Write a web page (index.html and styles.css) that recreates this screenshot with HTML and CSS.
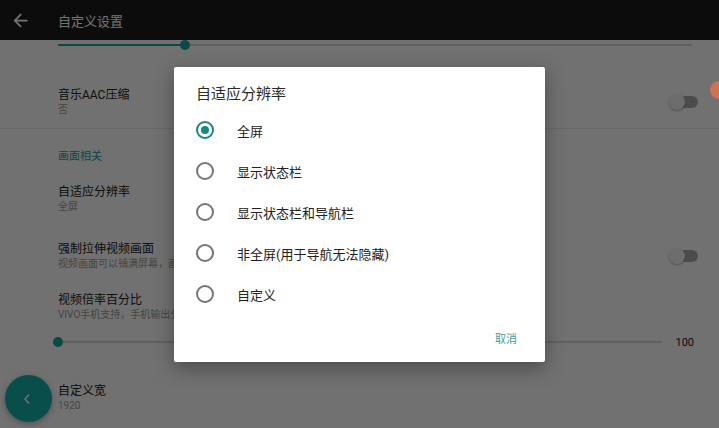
FILE: index.html
```html
<!DOCTYPE html>
<html lang="zh-CN">
<head>
    <meta charset="UTF-8">
    <meta name="viewport" content="width=device-width, initial-scale=1.0">
    <title>自定义设置</title>
    <link rel="stylesheet" href="styles.css">
</head>
<body>
    <div class="screen">
        <div class="appbar">
            <svg class="back" viewBox="0 0 24 24"><path d="M20 11H7.83l5.59-5.59L12 4l-8 8 8 8 1.41-1.41L7.83 13H20v-2z"/></svg>
            <span class="appbar-title">自定义设置</span>
        </div>

        <div class="prefs">
            <div class="seek seek-top">
                <div class="seek-fill"></div>
                <div class="seek-thumb"></div>
                <div class="seek-rest"></div>
            </div>

            <div class="pref pref-music">
                <div class="pref-text">
                    <div class="pref-title">音乐AAC压缩</div>
                    <div class="pref-sub">否</div>
                </div>
                <div class="switch"><span class="switch-thumb"></span></div>
            </div>

            <div class="category">画面相关</div>

            <div class="pref pref-res">
                <div class="pref-text">
                    <div class="pref-title">自适应分辨率</div>
                    <div class="pref-sub">全屏</div>
                </div>
            </div>

            <div class="pref pref-stretch">
                <div class="pref-text">
                    <div class="pref-title">强制拉伸视频画面</div>
                    <div class="pref-sub">视频画面可以铺满屏幕，画面可能会变形</div>
                </div>
                <div class="switch"><span class="switch-thumb"></span></div>
            </div>

            <div class="pref pref-rate">
                <div class="pref-text">
                    <div class="pref-title">视频倍率百分比</div>
                    <div class="pref-sub">VIVO手机支持，手机输出分辨率的百分比</div>
                </div>
            </div>

            <div class="seek seek-bottom">
                <div class="seek-thumb"></div>
                <div class="seek-rest"></div>
                <span class="seek-value">100</span>
            </div>

            <div class="pref pref-width">
                <div class="pref-text">
                    <div class="pref-title">自定义宽</div>
                    <div class="pref-sub">1920</div>
                </div>
            </div>
        </div>

        <div class="fab">
            <svg viewBox="0 0 8 12"><polyline points="6,1.5 2,6 6,10.5"/></svg>
        </div>
    </div>

    <div class="scrim">
        <div class="dialog">
            <div class="dialog-title">自适应分辨率</div>
            <div class="choices">
                <div class="choice checked"><span class="radio"></span>全屏</div>
                <div class="choice"><span class="radio"></span>显示状态栏</div>
                <div class="choice"><span class="radio"></span>显示状态栏和导航栏</div>
                <div class="choice"><span class="radio"></span>非全屏(用于导航无法隐藏)</div>
                <div class="choice"><span class="radio"></span>自定义</div>
            </div>
            <div class="dialog-actions">
                <span class="btn-text">取消</span>
            </div>
        </div>
    </div>

    <div class="float-ball"></div>
</body>
</html>
```

FILE: styles.css
```css
body {
    margin: 0;
    width: 719px;
    height: 428px;
    overflow: hidden;
    position: relative;
    font-family: Roboto, "Noto Sans CJK SC", sans-serif;
    background-color: #fafafa;
    color: #212121;
}

.screen {
    height: 100%;
}

.appbar {
    height: 40px;
    background-color: #1c1c1c;
    display: flex;
    align-items: center;
}

.back {
    width: 21px;
    height: 21px;
    margin-left: 10px;
    fill: #ffffff;
}

.appbar-title {
    margin-left: 27px;
    font-size: 13px;
    color: #ffffff;
}

.prefs {
    padding-left: 58px;
}

.seek {
    display: flex;
    align-items: center;
    height: 10px;
}

.seek-top {
    margin-right: 27px;
}

.seek-fill {
    width: 122px;
    height: 2px;
    background-color: #1aa39b;
}

.seek-thumb {
    width: 10px;
    height: 10px;
    border-radius: 50%;
    background-color: #1aa39b;
}

.seek-rest {
    flex: 1;
    height: 2px;
    background-color: #d6d6d6;
}

.seek-bottom {
    margin-top: 15px;
    margin-left: -5px;
    margin-right: 25px;
}

.seek-value {
    margin-left: 13px;
    font-size: 11px;
    color: #212121;
}

.pref {
    display: flex;
    align-items: center;
    justify-content: space-between;
}

.pref-title {
    font-size: 12px;
    line-height: 16px;
}

.pref-sub {
    font-size: 10px;
    line-height: 14px;
    color: #9a9a9a;
}

.pref-music {
    padding-top: 37px;
    padding-bottom: 11px;
    margin-left: -58px;
    padding-left: 58px;
    border-bottom: 1px solid #e4e4e4;
}

.pref-res {
    padding-top: 20px;
}

.pref-stretch {
    padding-top: 27px;
}

.pref-rate {
    padding-top: 21px;
}

.pref-width {
    padding-top: 36px;
}

.category {
    padding-top: 21px;
    font-size: 11px;
    line-height: 14px;
    color: #189e97;
}

.switch {
    position: relative;
    width: 26px;
    height: 12px;
    margin-right: 21px;
    border-radius: 6px;
    background-color: #a9a9a9;
}

.switch-thumb {
    position: absolute;
    left: -3px;
    top: -2px;
    width: 16px;
    height: 16px;
    border-radius: 50%;
    background-color: #f1f1f1;
    box-shadow: 0 1px 2px rgba(0, 0, 0, 0.3);
}

.fab {
    position: absolute;
    left: 5px;
    top: 375px;
    width: 47px;
    height: 47px;
    border-radius: 50%;
    background-color: #18aea7;
    box-shadow: 0 2px 6px rgba(0, 0, 0, 0.3);
    display: flex;
    align-items: center;
    justify-content: center;
}

.fab svg {
    width: 8px;
    height: 12px;
    fill: none;
    stroke: #ffffff;
    stroke-width: 1.4;
    margin-left: -4px;
}

.scrim {
    position: absolute;
    top: 0;
    left: 0;
    width: 100%;
    height: 100%;
    background-color: rgba(0, 0, 0, 0.55);
    display: flex;
    align-items: center;
    justify-content: center;
}

.dialog {
    width: 371px;
    background-color: #ffffff;
    border-radius: 2px;
    box-shadow: 0 6px 20px rgba(0, 0, 0, 0.35);
}

.dialog-title {
    padding: 18px 22px 0;
    font-size: 15px;
    line-height: 18px;
    color: #2a2a2a;
}

.choices {
    margin-top: 7px;
}

.choice {
    height: 41px;
    display: flex;
    align-items: center;
    padding-left: 22px;
    font-size: 13px;
    color: #212121;
}

.radio {
    width: 14px;
    height: 14px;
    border: 2px solid #757575;
    border-radius: 50%;
    margin-right: 23px;
    position: relative;
}

.checked .radio {
    border-color: #17877f;
}

.checked .radio::after {
    content: "";
    position: absolute;
    left: 3px;
    top: 3px;
    width: 8px;
    height: 8px;
    border-radius: 50%;
    background-color: #17877f;
}

.dialog-actions {
    height: 47px;
    display: flex;
    align-items: center;
    justify-content: flex-end;
    padding-right: 28px;
}

.btn-text {
    font-size: 11px;
    color: #3a9f9a;
}

.float-ball {
    position: absolute;
    right: -9px;
    top: 81px;
    width: 18px;
    height: 18px;
    border-radius: 50%;
    background-color: #cc7353;
}
```
